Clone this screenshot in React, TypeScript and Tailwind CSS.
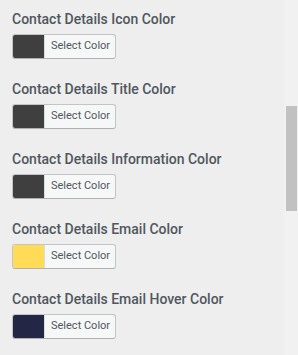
import React from "react";

const items = [
  { label: "Contact Details Icon Color", color: "#3f3f3f" },
  { label: "Contact Details Title Color", color: "#3f3f3f" },
  { label: "Contact Details Information Color", color: "#3f3f3f" },
  { label: "Contact Details Email Color", color: "#ffdb58" },
  { label: "Contact Details Email Hover Color", color: "#232644" },
];

export default function App() {
  return (
    <div
      className="flex w-[298px] h-[355px] overflow-hidden bg-[#eeeeee]"
      style={{ fontFamily: "Roboto, 'Liberation Sans', sans-serif" }}
    >
      <div className="flex-1 flex flex-col pl-3 pt-[10px]">
        {items.map((it) => (
          <div key={it.label} className="h-[70px] shrink-0 flex flex-col">
            <div className="text-[14px] leading-[18px] font-medium text-[#50575e] whitespace-nowrap">
              {it.label}
            </div>
            <div className="mt-[6px] flex w-[104px] h-[25px] rounded-[3px] border border-[#c3c4c7] border-b-[#b0b0b0] bg-[#f6f7f7] overflow-hidden">
              <div className="w-[31px] h-full" style={{ backgroundColor: it.color }} />
              <div className="flex-1 flex items-center pl-[6px] text-[11px] text-[#50575e] border-l border-[#dcdcde]">
                Select Color
              </div>
            </div>
          </div>
        ))}
      </div>
      <div className="w-[14px] h-full bg-[#f1f1f1] flex flex-col pt-[106px] pl-[2px]">
        <div className="w-[11px] h-[105px] bg-[#c1c1c1]" />
      </div>
    </div>
  );
}
